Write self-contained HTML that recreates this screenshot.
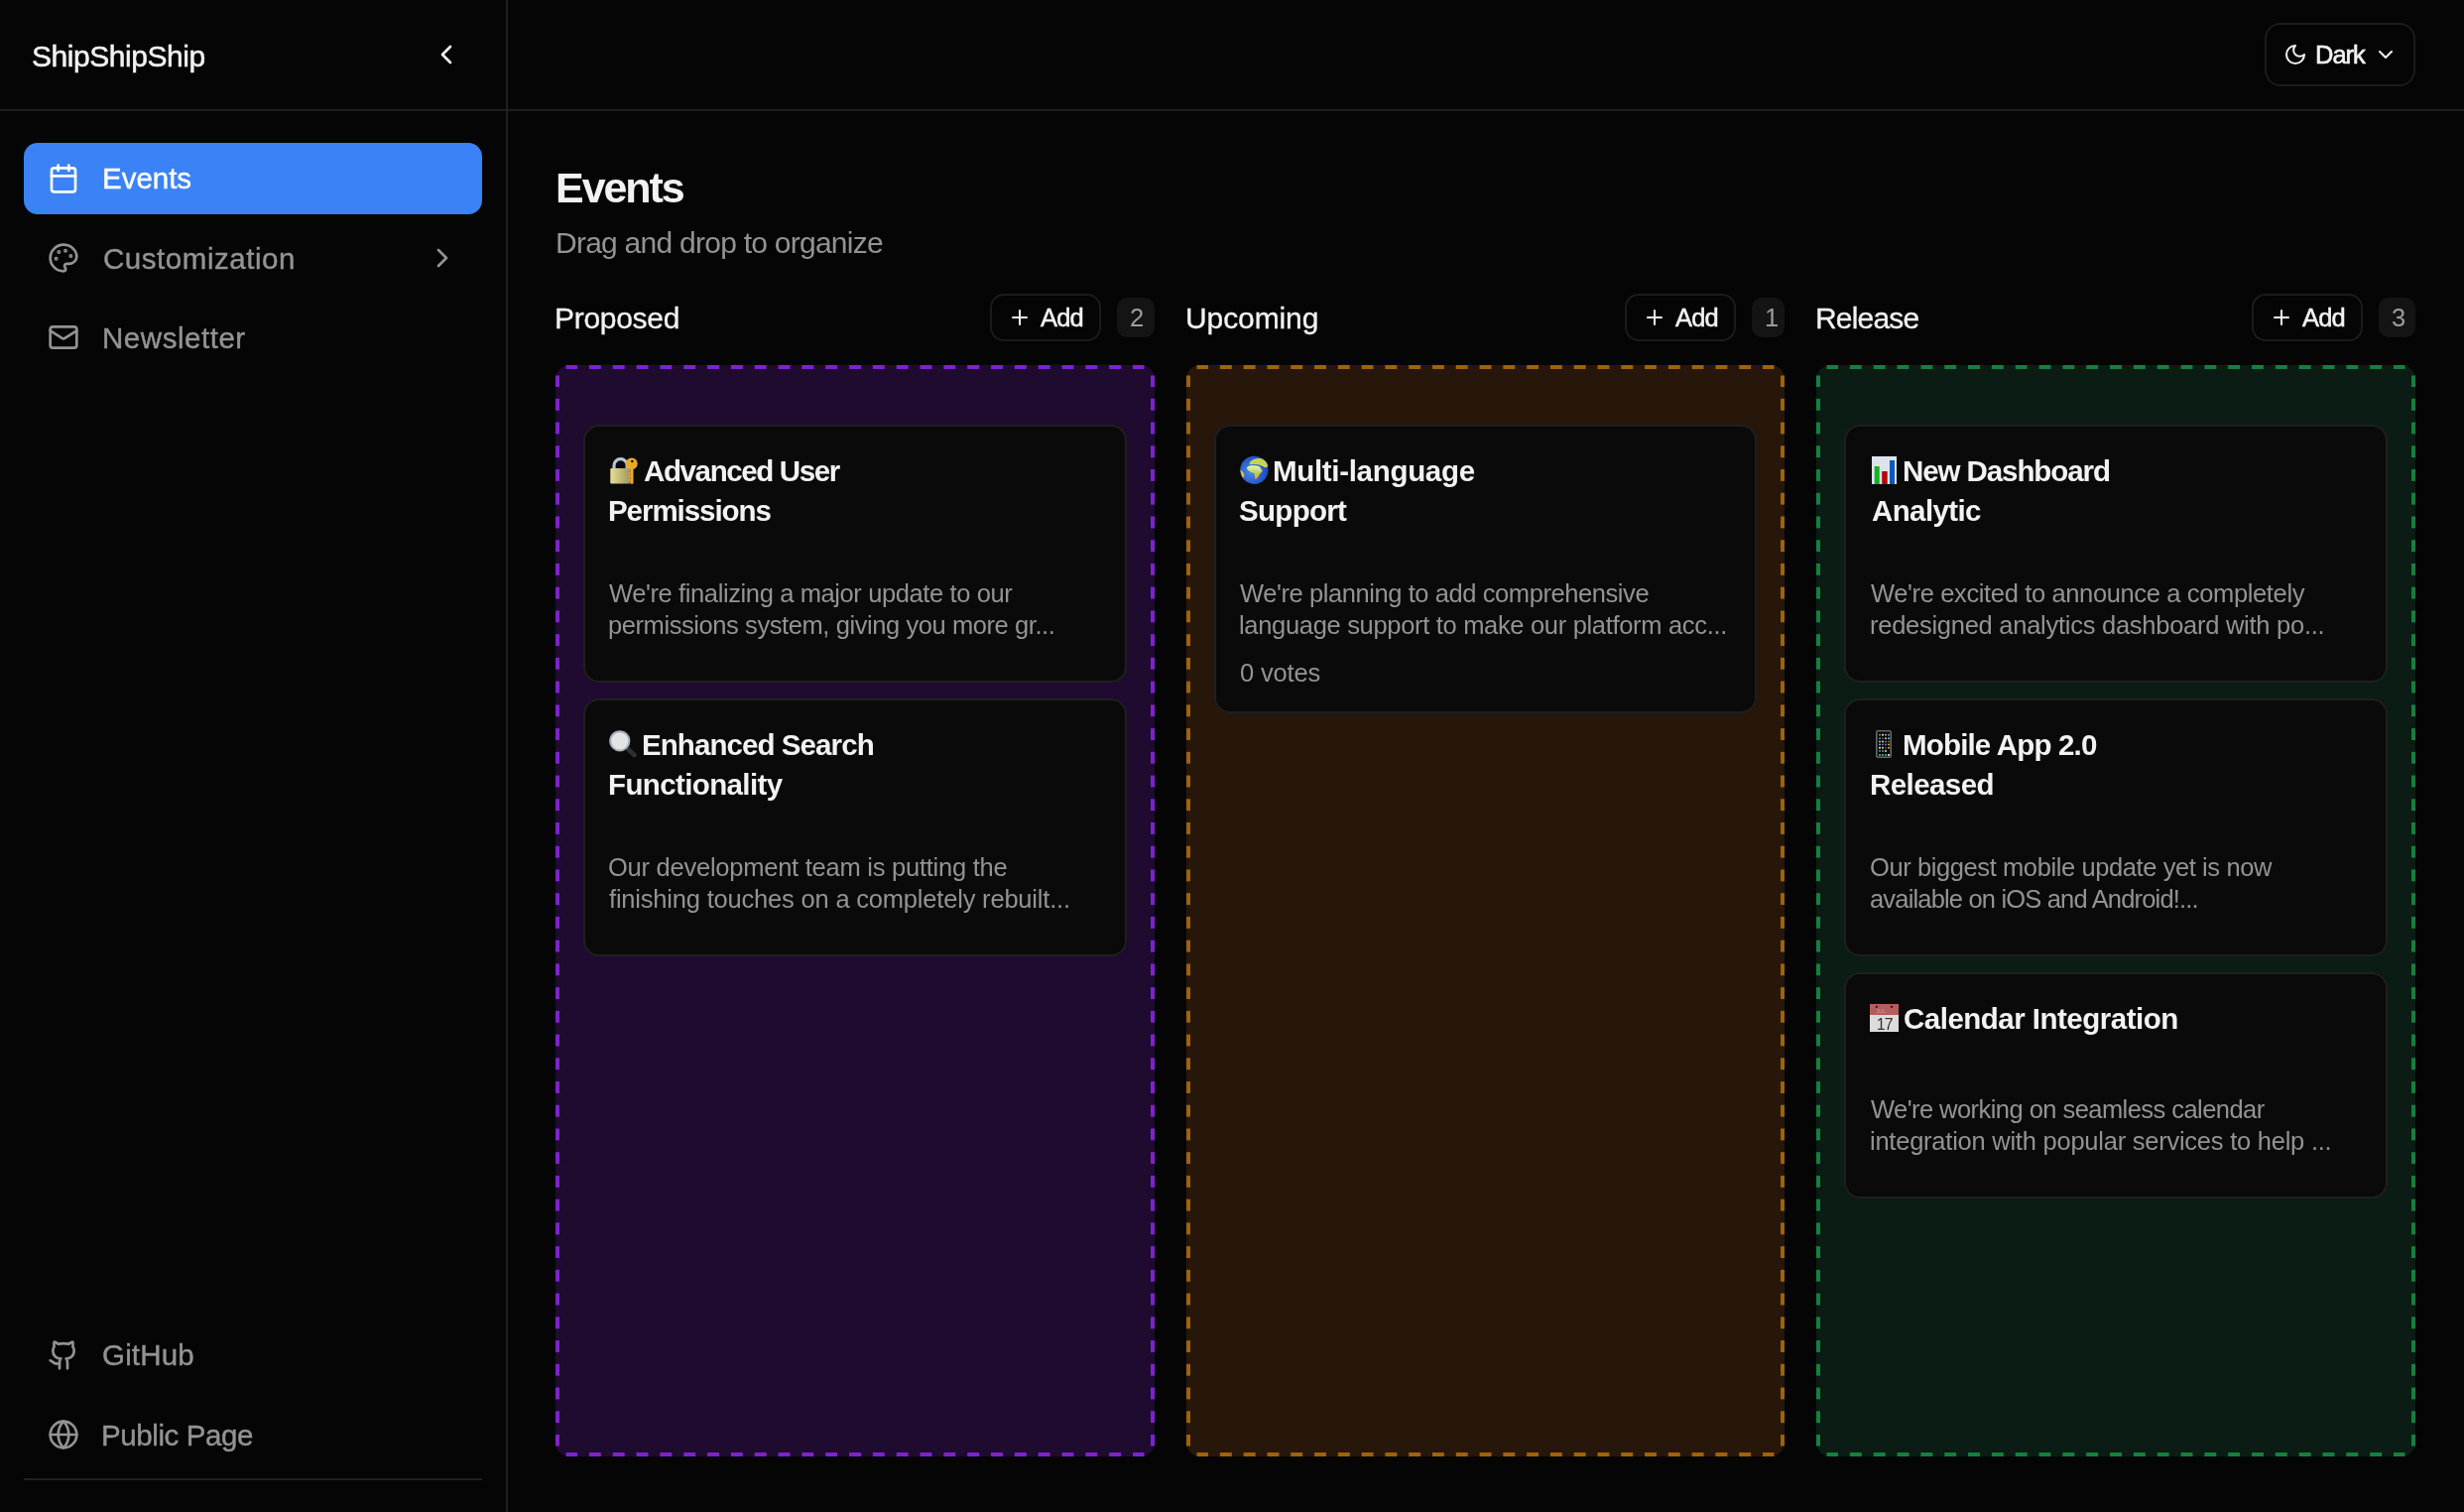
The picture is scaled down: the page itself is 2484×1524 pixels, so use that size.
<!DOCTYPE html>
<html><head><meta charset="utf-8"><title>Events</title>
<style>
html,body{margin:0;padding:0;}
body{width:2484px;height:1524px;overflow:hidden;background:#050505;position:relative;font-family:"Liberation Sans",sans-serif;}
.t{position:absolute;white-space:nowrap;will-change:transform;}
.b{position:absolute;}
.i{position:absolute;display:block;overflow:visible;}
</style></head><body>
<div class="b" style="left:510px;top:0px;width:2px;height:1524px;background:#1f1f1f"></div>
<div class="b" style="left:0px;top:110px;width:2484px;height:2px;background:#1f1f1f"></div>
<div class="t" style="left:31.87px;top:33.50px;font-size:30px;line-height:45px;color:#f2f2f2;letter-spacing:-0.456px;-webkit-text-stroke:0.5px #f2f2f2;">ShipShipShip</div>
<svg class="i" style="left:434px;top:39px;color:#f2f2f2" width="32" height="32" viewBox="0 0 24 24" fill="none" stroke="currentColor" stroke-width="2" stroke-linecap="round" stroke-linejoin="round"><path d="m15 18-6-6 6-6"/></svg>
<div class="b" style="left:24px;top:144px;width:462px;height:72px;background:#3b82f6;border-radius:14px"></div>
<svg class="i" style="left:48px;top:164px;color:#ffffff" width="32" height="32" viewBox="0 0 24 24" fill="none" stroke="currentColor" stroke-width="2" stroke-linecap="round" stroke-linejoin="round"><rect x="3" y="4" width="18" height="18" rx="2"/><path d="M16 2v4"/><path d="M8 2v4"/><path d="M3 10h18"/></svg>
<div class="t" style="left:103.28px;top:158.40px;font-size:29.5px;line-height:44px;color:#ffffff;letter-spacing:-0.016px;-webkit-text-stroke:0.4px #ffffff;">Events</div>
<svg class="i" style="left:48px;top:244px;color:#939393" width="32" height="32" viewBox="0 0 24 24" fill="none" stroke="currentColor" stroke-width="2" stroke-linecap="round" stroke-linejoin="round"><circle cx="13.5" cy="6.5" r=".5" fill="currentColor"/><circle cx="17.5" cy="10.5" r=".5" fill="currentColor"/><circle cx="8.5" cy="7.5" r=".5" fill="currentColor"/><circle cx="6.5" cy="12.5" r=".5" fill="currentColor"/><path d="M12 2C6.5 2 2 6.5 2 12s4.5 10 10 10c.926 0 1.648-.746 1.648-1.688 0-.437-.18-.835-.437-1.125-.29-.289-.438-.652-.438-1.125a1.640 1.640 0 0 1 1.668-1.668h1.996c3.051 0 5.555-2.503 5.555-5.554C21.965 6.012 17.461 2 12 2z"/></svg>
<div class="t" style="left:103.50px;top:238.90px;font-size:29.5px;line-height:44px;color:#939393;letter-spacing:0.542px;-webkit-text-stroke:0.4px #939393;">Customization</div>
<svg class="i" style="left:430px;top:244px;color:#939393" width="32" height="32" viewBox="0 0 24 24" fill="none" stroke="currentColor" stroke-width="2" stroke-linecap="round" stroke-linejoin="round"><path d="m9 18 6-6-6-6"/></svg>
<svg class="i" style="left:48px;top:324px;color:#939393" width="32" height="32" viewBox="0 0 24 24" fill="none" stroke="currentColor" stroke-width="2" stroke-linecap="round" stroke-linejoin="round"><rect x="2" y="4" width="20" height="16" rx="2"/><path d="m22 7-8.97 5.7a1.94 1.94 0 0 1-2.06 0L2 7"/></svg>
<div class="t" style="left:102.70px;top:318.70px;font-size:29.5px;line-height:44px;color:#939393;letter-spacing:0.538px;-webkit-text-stroke:0.4px #939393;">Newsletter</div>
<svg class="i" style="left:48px;top:1350px;color:#939393" width="32" height="32" viewBox="0 0 24 24" fill="none" stroke="currentColor" stroke-width="2" stroke-linecap="round" stroke-linejoin="round"><path d="M15 22v-4a4.8 4.8 0 0 0-1-3.5c3 0 6-2 6-5.5.08-1.25-.27-2.48-1-3.5.28-1.15.28-2.35 0-3.5 0 0-1 0-3 1.5-2.64-.5-5.36-.5-8 0C6 2 5 2 5 2c-.3 1.15-.3 2.35 0 3.5A5.403 5.403 0 0 0 4 9c0 3.5 3 5.5 6 5.5-.39.49-.68 1.05-.85 1.65-.17.6-.22 1.23-.15 1.85v4"/><path d="M9 18c-4.51 2-5-2-7-2"/></svg>
<div class="t" style="left:103.08px;top:1344.20px;font-size:29.5px;line-height:44px;color:#939393;letter-spacing:0.184px;-webkit-text-stroke:0.4px #939393;">GitHub</div>
<svg class="i" style="left:48px;top:1430px;color:#939393" width="32" height="32" viewBox="0 0 24 24" fill="none" stroke="currentColor" stroke-width="2" stroke-linecap="round" stroke-linejoin="round"><circle cx="12" cy="12" r="10"/><path d="M12 2a14.5 14.5 0 0 0 0 20 14.5 14.5 0 0 0 0-20"/><path d="M2 12h20"/></svg>
<div class="t" style="left:102.28px;top:1424.80px;font-size:29.5px;line-height:44px;color:#939393;letter-spacing:-0.400px;-webkit-text-stroke:0.4px #939393;">Public Page</div>
<div class="b" style="left:24px;top:1490px;width:462px;height:2px;background:#1f1f1f"></div>
<div class="b" style="left:2283px;top:23px;width:152px;height:64px;border:2px solid #1b1b1b;border-radius:16px;box-sizing:border-box"></div>
<svg class="i" style="left:2302px;top:43px;color:#f2f2f2" width="24" height="24" viewBox="0 0 24 24" fill="none" stroke="currentColor" stroke-width="2" stroke-linecap="round" stroke-linejoin="round"><path d="M12 3a6 6 0 0 0 9 9 9 9 0 1 1-9-9Z"/></svg>
<div class="t" style="left:2333.90px;top:36.00px;font-size:25.5px;line-height:38px;color:#f2f2f2;letter-spacing:-1.013px;-webkit-text-stroke:0.6px #f2f2f2;">Dark</div>
<svg class="i" style="left:2393px;top:43px;color:#f2f2f2" width="24" height="24" viewBox="0 0 24 24" fill="none" stroke="currentColor" stroke-width="2" stroke-linecap="round" stroke-linejoin="round"><path d="m6 9 6 6 6-6"/></svg>
<div class="t" style="left:559.52px;top:156.80px;font-size:43px;line-height:64px;color:#f2f2f2;font-weight:700;letter-spacing:-2.052px;">Events</div>
<div class="t" style="left:559.52px;top:222.00px;font-size:30px;line-height:45px;color:#939393;letter-spacing:-0.747px;">Drag and drop to organize</div>
<div class="t" style="left:558.83px;top:298.00px;font-size:30px;line-height:45px;color:#f2f2f2;letter-spacing:-0.289px;-webkit-text-stroke:0.3px #f2f2f2;">Proposed</div>
<div class="b" style="left:998px;top:296px;width:112px;height:48px;border:2px solid #1b1b1b;border-radius:14px;box-sizing:border-box"></div>
<svg class="i" style="left:1016px;top:308px;color:#f2f2f2" width="24" height="24" viewBox="0 0 24 24" fill="none" stroke="currentColor" stroke-width="2" stroke-linecap="round" stroke-linejoin="round"><path d="M5 12h14"/><path d="M12 5v14"/></svg>
<div class="t" style="left:1048.55px;top:301.00px;font-size:25.5px;line-height:38px;color:#f2f2f2;letter-spacing:-0.830px;-webkit-text-stroke:0.5px #f2f2f2;">Add</div>
<div class="b" style="left:1126px;top:300px;width:38px;height:40px;background:#141414;border-radius:10px"></div>
<div class="t" style="left:1138.80px;top:301.00px;font-size:25.5px;line-height:38px;color:#9c9c9c;">2</div>
<svg class="i" style="left:560px;top:368px" width="604" height="1100" viewBox="0 0 604 1100"><g fill="#7e22ce"><rect x="0" y="0" width="604" height="1100" rx="14" fill="#1e0b2f"/><rect x="33.915" y="0" width="11.915" height="4"/><rect x="33.915" y="1096" width="11.915" height="4"/><rect x="57.745" y="0" width="11.915" height="4"/><rect x="57.745" y="1096" width="11.915" height="4"/><rect x="81.574" y="0" width="11.915" height="4"/><rect x="81.574" y="1096" width="11.915" height="4"/><rect x="105.404" y="0" width="11.915" height="4"/><rect x="105.404" y="1096" width="11.915" height="4"/><rect x="129.234" y="0" width="11.915" height="4"/><rect x="129.234" y="1096" width="11.915" height="4"/><rect x="153.064" y="0" width="11.915" height="4"/><rect x="153.064" y="1096" width="11.915" height="4"/><rect x="176.894" y="0" width="11.915" height="4"/><rect x="176.894" y="1096" width="11.915" height="4"/><rect x="200.723" y="0" width="11.915" height="4"/><rect x="200.723" y="1096" width="11.915" height="4"/><rect x="224.553" y="0" width="11.915" height="4"/><rect x="224.553" y="1096" width="11.915" height="4"/><rect x="248.383" y="0" width="11.915" height="4"/><rect x="248.383" y="1096" width="11.915" height="4"/><rect x="272.213" y="0" width="11.915" height="4"/><rect x="272.213" y="1096" width="11.915" height="4"/><rect x="296.043" y="0" width="11.915" height="4"/><rect x="296.043" y="1096" width="11.915" height="4"/><rect x="319.872" y="0" width="11.915" height="4"/><rect x="319.872" y="1096" width="11.915" height="4"/><rect x="343.702" y="0" width="11.915" height="4"/><rect x="343.702" y="1096" width="11.915" height="4"/><rect x="367.532" y="0" width="11.915" height="4"/><rect x="367.532" y="1096" width="11.915" height="4"/><rect x="391.362" y="0" width="11.915" height="4"/><rect x="391.362" y="1096" width="11.915" height="4"/><rect x="415.191" y="0" width="11.915" height="4"/><rect x="415.191" y="1096" width="11.915" height="4"/><rect x="439.021" y="0" width="11.915" height="4"/><rect x="439.021" y="1096" width="11.915" height="4"/><rect x="462.851" y="0" width="11.915" height="4"/><rect x="462.851" y="1096" width="11.915" height="4"/><rect x="486.681" y="0" width="11.915" height="4"/><rect x="486.681" y="1096" width="11.915" height="4"/><rect x="510.511" y="0" width="11.915" height="4"/><rect x="510.511" y="1096" width="11.915" height="4"/><rect x="534.340" y="0" width="11.915" height="4"/><rect x="534.340" y="1096" width="11.915" height="4"/><rect x="558.170" y="0" width="11.915" height="4"/><rect x="558.170" y="1096" width="11.915" height="4"/><rect x="0" y="33.865" width="4" height="11.865"/><rect x="600" y="33.865" width="4" height="11.865"/><rect x="0" y="57.596" width="4" height="11.865"/><rect x="600" y="57.596" width="4" height="11.865"/><rect x="0" y="81.326" width="4" height="11.865"/><rect x="600" y="81.326" width="4" height="11.865"/><rect x="0" y="105.056" width="4" height="11.865"/><rect x="600" y="105.056" width="4" height="11.865"/><rect x="0" y="128.787" width="4" height="11.865"/><rect x="600" y="128.787" width="4" height="11.865"/><rect x="0" y="152.517" width="4" height="11.865"/><rect x="600" y="152.517" width="4" height="11.865"/><rect x="0" y="176.247" width="4" height="11.865"/><rect x="600" y="176.247" width="4" height="11.865"/><rect x="0" y="199.978" width="4" height="11.865"/><rect x="600" y="199.978" width="4" height="11.865"/><rect x="0" y="223.708" width="4" height="11.865"/><rect x="600" y="223.708" width="4" height="11.865"/><rect x="0" y="247.438" width="4" height="11.865"/><rect x="600" y="247.438" width="4" height="11.865"/><rect x="0" y="271.169" width="4" height="11.865"/><rect x="600" y="271.169" width="4" height="11.865"/><rect x="0" y="294.899" width="4" height="11.865"/><rect x="600" y="294.899" width="4" height="11.865"/><rect x="0" y="318.629" width="4" height="11.865"/><rect x="600" y="318.629" width="4" height="11.865"/><rect x="0" y="342.360" width="4" height="11.865"/><rect x="600" y="342.360" width="4" height="11.865"/><rect x="0" y="366.090" width="4" height="11.865"/><rect x="600" y="366.090" width="4" height="11.865"/><rect x="0" y="389.820" width="4" height="11.865"/><rect x="600" y="389.820" width="4" height="11.865"/><rect x="0" y="413.551" width="4" height="11.865"/><rect x="600" y="413.551" width="4" height="11.865"/><rect x="0" y="437.281" width="4" height="11.865"/><rect x="600" y="437.281" width="4" height="11.865"/><rect x="0" y="461.011" width="4" height="11.865"/><rect x="600" y="461.011" width="4" height="11.865"/><rect x="0" y="484.742" width="4" height="11.865"/><rect x="600" y="484.742" width="4" height="11.865"/><rect x="0" y="508.472" width="4" height="11.865"/><rect x="600" y="508.472" width="4" height="11.865"/><rect x="0" y="532.202" width="4" height="11.865"/><rect x="600" y="532.202" width="4" height="11.865"/><rect x="0" y="555.933" width="4" height="11.865"/><rect x="600" y="555.933" width="4" height="11.865"/><rect x="0" y="579.663" width="4" height="11.865"/><rect x="600" y="579.663" width="4" height="11.865"/><rect x="0" y="603.393" width="4" height="11.865"/><rect x="600" y="603.393" width="4" height="11.865"/><rect x="0" y="627.124" width="4" height="11.865"/><rect x="600" y="627.124" width="4" height="11.865"/><rect x="0" y="650.854" width="4" height="11.865"/><rect x="600" y="650.854" width="4" height="11.865"/><rect x="0" y="674.584" width="4" height="11.865"/><rect x="600" y="674.584" width="4" height="11.865"/><rect x="0" y="698.315" width="4" height="11.865"/><rect x="600" y="698.315" width="4" height="11.865"/><rect x="0" y="722.045" width="4" height="11.865"/><rect x="600" y="722.045" width="4" height="11.865"/><rect x="0" y="745.775" width="4" height="11.865"/><rect x="600" y="745.775" width="4" height="11.865"/><rect x="0" y="769.506" width="4" height="11.865"/><rect x="600" y="769.506" width="4" height="11.865"/><rect x="0" y="793.236" width="4" height="11.865"/><rect x="600" y="793.236" width="4" height="11.865"/><rect x="0" y="816.966" width="4" height="11.865"/><rect x="600" y="816.966" width="4" height="11.865"/><rect x="0" y="840.697" width="4" height="11.865"/><rect x="600" y="840.697" width="4" height="11.865"/><rect x="0" y="864.427" width="4" height="11.865"/><rect x="600" y="864.427" width="4" height="11.865"/><rect x="0" y="888.157" width="4" height="11.865"/><rect x="600" y="888.157" width="4" height="11.865"/><rect x="0" y="911.888" width="4" height="11.865"/><rect x="600" y="911.888" width="4" height="11.865"/><rect x="0" y="935.618" width="4" height="11.865"/><rect x="600" y="935.618" width="4" height="11.865"/><rect x="0" y="959.348" width="4" height="11.865"/><rect x="600" y="959.348" width="4" height="11.865"/><rect x="0" y="983.079" width="4" height="11.865"/><rect x="600" y="983.079" width="4" height="11.865"/><rect x="0" y="1006.809" width="4" height="11.865"/><rect x="600" y="1006.809" width="4" height="11.865"/><rect x="0" y="1030.539" width="4" height="11.865"/><rect x="600" y="1030.539" width="4" height="11.865"/><rect x="0" y="1054.270" width="4" height="11.865"/><rect x="600" y="1054.270" width="4" height="11.865"/><rect x="10.5" y="0" width="11.5" height="4"/><rect x="582" y="0" width="11.5" height="4"/><rect x="10.5" y="1096" width="11.5" height="4"/><rect x="582" y="1096" width="11.5" height="4"/><rect x="0" y="10.5" width="4" height="11.5"/><rect x="600" y="10.5" width="4" height="11.5"/><rect x="0" y="1078" width="4" height="11.5"/><rect x="600" y="1078" width="4" height="11.5"/></g></svg>
<div class="t" style="left:1194.83px;top:298.00px;font-size:30px;line-height:45px;color:#f2f2f2;letter-spacing:-0.097px;-webkit-text-stroke:0.3px #f2f2f2;">Upcoming</div>
<div class="b" style="left:1638px;top:296px;width:112px;height:48px;border:2px solid #1b1b1b;border-radius:14px;box-sizing:border-box"></div>
<svg class="i" style="left:1656px;top:308px;color:#f2f2f2" width="24" height="24" viewBox="0 0 24 24" fill="none" stroke="currentColor" stroke-width="2" stroke-linecap="round" stroke-linejoin="round"><path d="M5 12h14"/><path d="M12 5v14"/></svg>
<div class="t" style="left:1688.55px;top:301.00px;font-size:25.5px;line-height:38px;color:#f2f2f2;letter-spacing:-0.830px;-webkit-text-stroke:0.5px #f2f2f2;">Add</div>
<div class="b" style="left:1766px;top:300px;width:33px;height:40px;background:#141414;border-radius:10px"></div>
<div class="t" style="left:1779.20px;top:301.00px;font-size:25.5px;line-height:38px;color:#9c9c9c;">1</div>
<svg class="i" style="left:1196px;top:368px" width="603" height="1100" viewBox="0 0 603 1100"><g fill="#a16207"><rect x="0" y="0" width="603" height="1100" rx="14" fill="#26170a"/><rect x="33.894" y="0" width="11.894" height="4"/><rect x="33.894" y="1096" width="11.894" height="4"/><rect x="57.681" y="0" width="11.894" height="4"/><rect x="57.681" y="1096" width="11.894" height="4"/><rect x="81.468" y="0" width="11.894" height="4"/><rect x="81.468" y="1096" width="11.894" height="4"/><rect x="105.255" y="0" width="11.894" height="4"/><rect x="105.255" y="1096" width="11.894" height="4"/><rect x="129.043" y="0" width="11.894" height="4"/><rect x="129.043" y="1096" width="11.894" height="4"/><rect x="152.830" y="0" width="11.894" height="4"/><rect x="152.830" y="1096" width="11.894" height="4"/><rect x="176.617" y="0" width="11.894" height="4"/><rect x="176.617" y="1096" width="11.894" height="4"/><rect x="200.404" y="0" width="11.894" height="4"/><rect x="200.404" y="1096" width="11.894" height="4"/><rect x="224.191" y="0" width="11.894" height="4"/><rect x="224.191" y="1096" width="11.894" height="4"/><rect x="247.979" y="0" width="11.894" height="4"/><rect x="247.979" y="1096" width="11.894" height="4"/><rect x="271.766" y="0" width="11.894" height="4"/><rect x="271.766" y="1096" width="11.894" height="4"/><rect x="295.553" y="0" width="11.894" height="4"/><rect x="295.553" y="1096" width="11.894" height="4"/><rect x="319.340" y="0" width="11.894" height="4"/><rect x="319.340" y="1096" width="11.894" height="4"/><rect x="343.128" y="0" width="11.894" height="4"/><rect x="343.128" y="1096" width="11.894" height="4"/><rect x="366.915" y="0" width="11.894" height="4"/><rect x="366.915" y="1096" width="11.894" height="4"/><rect x="390.702" y="0" width="11.894" height="4"/><rect x="390.702" y="1096" width="11.894" height="4"/><rect x="414.489" y="0" width="11.894" height="4"/><rect x="414.489" y="1096" width="11.894" height="4"/><rect x="438.277" y="0" width="11.894" height="4"/><rect x="438.277" y="1096" width="11.894" height="4"/><rect x="462.064" y="0" width="11.894" height="4"/><rect x="462.064" y="1096" width="11.894" height="4"/><rect x="485.851" y="0" width="11.894" height="4"/><rect x="485.851" y="1096" width="11.894" height="4"/><rect x="509.638" y="0" width="11.894" height="4"/><rect x="509.638" y="1096" width="11.894" height="4"/><rect x="533.426" y="0" width="11.894" height="4"/><rect x="533.426" y="1096" width="11.894" height="4"/><rect x="557.213" y="0" width="11.894" height="4"/><rect x="557.213" y="1096" width="11.894" height="4"/><rect x="0" y="33.865" width="4" height="11.865"/><rect x="599" y="33.865" width="4" height="11.865"/><rect x="0" y="57.596" width="4" height="11.865"/><rect x="599" y="57.596" width="4" height="11.865"/><rect x="0" y="81.326" width="4" height="11.865"/><rect x="599" y="81.326" width="4" height="11.865"/><rect x="0" y="105.056" width="4" height="11.865"/><rect x="599" y="105.056" width="4" height="11.865"/><rect x="0" y="128.787" width="4" height="11.865"/><rect x="599" y="128.787" width="4" height="11.865"/><rect x="0" y="152.517" width="4" height="11.865"/><rect x="599" y="152.517" width="4" height="11.865"/><rect x="0" y="176.247" width="4" height="11.865"/><rect x="599" y="176.247" width="4" height="11.865"/><rect x="0" y="199.978" width="4" height="11.865"/><rect x="599" y="199.978" width="4" height="11.865"/><rect x="0" y="223.708" width="4" height="11.865"/><rect x="599" y="223.708" width="4" height="11.865"/><rect x="0" y="247.438" width="4" height="11.865"/><rect x="599" y="247.438" width="4" height="11.865"/><rect x="0" y="271.169" width="4" height="11.865"/><rect x="599" y="271.169" width="4" height="11.865"/><rect x="0" y="294.899" width="4" height="11.865"/><rect x="599" y="294.899" width="4" height="11.865"/><rect x="0" y="318.629" width="4" height="11.865"/><rect x="599" y="318.629" width="4" height="11.865"/><rect x="0" y="342.360" width="4" height="11.865"/><rect x="599" y="342.360" width="4" height="11.865"/><rect x="0" y="366.090" width="4" height="11.865"/><rect x="599" y="366.090" width="4" height="11.865"/><rect x="0" y="389.820" width="4" height="11.865"/><rect x="599" y="389.820" width="4" height="11.865"/><rect x="0" y="413.551" width="4" height="11.865"/><rect x="599" y="413.551" width="4" height="11.865"/><rect x="0" y="437.281" width="4" height="11.865"/><rect x="599" y="437.281" width="4" height="11.865"/><rect x="0" y="461.011" width="4" height="11.865"/><rect x="599" y="461.011" width="4" height="11.865"/><rect x="0" y="484.742" width="4" height="11.865"/><rect x="599" y="484.742" width="4" height="11.865"/><rect x="0" y="508.472" width="4" height="11.865"/><rect x="599" y="508.472" width="4" height="11.865"/><rect x="0" y="532.202" width="4" height="11.865"/><rect x="599" y="532.202" width="4" height="11.865"/><rect x="0" y="555.933" width="4" height="11.865"/><rect x="599" y="555.933" width="4" height="11.865"/><rect x="0" y="579.663" width="4" height="11.865"/><rect x="599" y="579.663" width="4" height="11.865"/><rect x="0" y="603.393" width="4" height="11.865"/><rect x="599" y="603.393" width="4" height="11.865"/><rect x="0" y="627.124" width="4" height="11.865"/><rect x="599" y="627.124" width="4" height="11.865"/><rect x="0" y="650.854" width="4" height="11.865"/><rect x="599" y="650.854" width="4" height="11.865"/><rect x="0" y="674.584" width="4" height="11.865"/><rect x="599" y="674.584" width="4" height="11.865"/><rect x="0" y="698.315" width="4" height="11.865"/><rect x="599" y="698.315" width="4" height="11.865"/><rect x="0" y="722.045" width="4" height="11.865"/><rect x="599" y="722.045" width="4" height="11.865"/><rect x="0" y="745.775" width="4" height="11.865"/><rect x="599" y="745.775" width="4" height="11.865"/><rect x="0" y="769.506" width="4" height="11.865"/><rect x="599" y="769.506" width="4" height="11.865"/><rect x="0" y="793.236" width="4" height="11.865"/><rect x="599" y="793.236" width="4" height="11.865"/><rect x="0" y="816.966" width="4" height="11.865"/><rect x="599" y="816.966" width="4" height="11.865"/><rect x="0" y="840.697" width="4" height="11.865"/><rect x="599" y="840.697" width="4" height="11.865"/><rect x="0" y="864.427" width="4" height="11.865"/><rect x="599" y="864.427" width="4" height="11.865"/><rect x="0" y="888.157" width="4" height="11.865"/><rect x="599" y="888.157" width="4" height="11.865"/><rect x="0" y="911.888" width="4" height="11.865"/><rect x="599" y="911.888" width="4" height="11.865"/><rect x="0" y="935.618" width="4" height="11.865"/><rect x="599" y="935.618" width="4" height="11.865"/><rect x="0" y="959.348" width="4" height="11.865"/><rect x="599" y="959.348" width="4" height="11.865"/><rect x="0" y="983.079" width="4" height="11.865"/><rect x="599" y="983.079" width="4" height="11.865"/><rect x="0" y="1006.809" width="4" height="11.865"/><rect x="599" y="1006.809" width="4" height="11.865"/><rect x="0" y="1030.539" width="4" height="11.865"/><rect x="599" y="1030.539" width="4" height="11.865"/><rect x="0" y="1054.270" width="4" height="11.865"/><rect x="599" y="1054.270" width="4" height="11.865"/><rect x="10.5" y="0" width="11.5" height="4"/><rect x="581" y="0" width="11.5" height="4"/><rect x="10.5" y="1096" width="11.5" height="4"/><rect x="581" y="1096" width="11.5" height="4"/><rect x="0" y="10.5" width="4" height="11.5"/><rect x="599" y="10.5" width="4" height="11.5"/><rect x="0" y="1078" width="4" height="11.5"/><rect x="599" y="1078" width="4" height="11.5"/></g></svg>
<div class="t" style="left:1830.41px;top:298.00px;font-size:30px;line-height:45px;color:#f2f2f2;letter-spacing:-0.830px;-webkit-text-stroke:0.3px #f2f2f2;">Release</div>
<div class="b" style="left:2270px;top:296px;width:112px;height:48px;border:2px solid #1b1b1b;border-radius:14px;box-sizing:border-box"></div>
<svg class="i" style="left:2288px;top:308px;color:#f2f2f2" width="24" height="24" viewBox="0 0 24 24" fill="none" stroke="currentColor" stroke-width="2" stroke-linecap="round" stroke-linejoin="round"><path d="M5 12h14"/><path d="M12 5v14"/></svg>
<div class="t" style="left:2320.55px;top:301.00px;font-size:25.5px;line-height:38px;color:#f2f2f2;letter-spacing:-0.830px;-webkit-text-stroke:0.5px #f2f2f2;">Add</div>
<div class="b" style="left:2398px;top:300px;width:37px;height:40px;background:#141414;border-radius:10px"></div>
<div class="t" style="left:2410.70px;top:301.00px;font-size:25.5px;line-height:38px;color:#9c9c9c;">3</div>
<svg class="i" style="left:1831px;top:368px" width="604" height="1100" viewBox="0 0 604 1100"><g fill="#15803d"><rect x="0" y="0" width="604" height="1100" rx="14" fill="#0a1c13"/><rect x="33.915" y="0" width="11.915" height="4"/><rect x="33.915" y="1096" width="11.915" height="4"/><rect x="57.745" y="0" width="11.915" height="4"/><rect x="57.745" y="1096" width="11.915" height="4"/><rect x="81.574" y="0" width="11.915" height="4"/><rect x="81.574" y="1096" width="11.915" height="4"/><rect x="105.404" y="0" width="11.915" height="4"/><rect x="105.404" y="1096" width="11.915" height="4"/><rect x="129.234" y="0" width="11.915" height="4"/><rect x="129.234" y="1096" width="11.915" height="4"/><rect x="153.064" y="0" width="11.915" height="4"/><rect x="153.064" y="1096" width="11.915" height="4"/><rect x="176.894" y="0" width="11.915" height="4"/><rect x="176.894" y="1096" width="11.915" height="4"/><rect x="200.723" y="0" width="11.915" height="4"/><rect x="200.723" y="1096" width="11.915" height="4"/><rect x="224.553" y="0" width="11.915" height="4"/><rect x="224.553" y="1096" width="11.915" height="4"/><rect x="248.383" y="0" width="11.915" height="4"/><rect x="248.383" y="1096" width="11.915" height="4"/><rect x="272.213" y="0" width="11.915" height="4"/><rect x="272.213" y="1096" width="11.915" height="4"/><rect x="296.043" y="0" width="11.915" height="4"/><rect x="296.043" y="1096" width="11.915" height="4"/><rect x="319.872" y="0" width="11.915" height="4"/><rect x="319.872" y="1096" width="11.915" height="4"/><rect x="343.702" y="0" width="11.915" height="4"/><rect x="343.702" y="1096" width="11.915" height="4"/><rect x="367.532" y="0" width="11.915" height="4"/><rect x="367.532" y="1096" width="11.915" height="4"/><rect x="391.362" y="0" width="11.915" height="4"/><rect x="391.362" y="1096" width="11.915" height="4"/><rect x="415.191" y="0" width="11.915" height="4"/><rect x="415.191" y="1096" width="11.915" height="4"/><rect x="439.021" y="0" width="11.915" height="4"/><rect x="439.021" y="1096" width="11.915" height="4"/><rect x="462.851" y="0" width="11.915" height="4"/><rect x="462.851" y="1096" width="11.915" height="4"/><rect x="486.681" y="0" width="11.915" height="4"/><rect x="486.681" y="1096" width="11.915" height="4"/><rect x="510.511" y="0" width="11.915" height="4"/><rect x="510.511" y="1096" width="11.915" height="4"/><rect x="534.340" y="0" width="11.915" height="4"/><rect x="534.340" y="1096" width="11.915" height="4"/><rect x="558.170" y="0" width="11.915" height="4"/><rect x="558.170" y="1096" width="11.915" height="4"/><rect x="0" y="33.865" width="4" height="11.865"/><rect x="600" y="33.865" width="4" height="11.865"/><rect x="0" y="57.596" width="4" height="11.865"/><rect x="600" y="57.596" width="4" height="11.865"/><rect x="0" y="81.326" width="4" height="11.865"/><rect x="600" y="81.326" width="4" height="11.865"/><rect x="0" y="105.056" width="4" height="11.865"/><rect x="600" y="105.056" width="4" height="11.865"/><rect x="0" y="128.787" width="4" height="11.865"/><rect x="600" y="128.787" width="4" height="11.865"/><rect x="0" y="152.517" width="4" height="11.865"/><rect x="600" y="152.517" width="4" height="11.865"/><rect x="0" y="176.247" width="4" height="11.865"/><rect x="600" y="176.247" width="4" height="11.865"/><rect x="0" y="199.978" width="4" height="11.865"/><rect x="600" y="199.978" width="4" height="11.865"/><rect x="0" y="223.708" width="4" height="11.865"/><rect x="600" y="223.708" width="4" height="11.865"/><rect x="0" y="247.438" width="4" height="11.865"/><rect x="600" y="247.438" width="4" height="11.865"/><rect x="0" y="271.169" width="4" height="11.865"/><rect x="600" y="271.169" width="4" height="11.865"/><rect x="0" y="294.899" width="4" height="11.865"/><rect x="600" y="294.899" width="4" height="11.865"/><rect x="0" y="318.629" width="4" height="11.865"/><rect x="600" y="318.629" width="4" height="11.865"/><rect x="0" y="342.360" width="4" height="11.865"/><rect x="600" y="342.360" width="4" height="11.865"/><rect x="0" y="366.090" width="4" height="11.865"/><rect x="600" y="366.090" width="4" height="11.865"/><rect x="0" y="389.820" width="4" height="11.865"/><rect x="600" y="389.820" width="4" height="11.865"/><rect x="0" y="413.551" width="4" height="11.865"/><rect x="600" y="413.551" width="4" height="11.865"/><rect x="0" y="437.281" width="4" height="11.865"/><rect x="600" y="437.281" width="4" height="11.865"/><rect x="0" y="461.011" width="4" height="11.865"/><rect x="600" y="461.011" width="4" height="11.865"/><rect x="0" y="484.742" width="4" height="11.865"/><rect x="600" y="484.742" width="4" height="11.865"/><rect x="0" y="508.472" width="4" height="11.865"/><rect x="600" y="508.472" width="4" height="11.865"/><rect x="0" y="532.202" width="4" height="11.865"/><rect x="600" y="532.202" width="4" height="11.865"/><rect x="0" y="555.933" width="4" height="11.865"/><rect x="600" y="555.933" width="4" height="11.865"/><rect x="0" y="579.663" width="4" height="11.865"/><rect x="600" y="579.663" width="4" height="11.865"/><rect x="0" y="603.393" width="4" height="11.865"/><rect x="600" y="603.393" width="4" height="11.865"/><rect x="0" y="627.124" width="4" height="11.865"/><rect x="600" y="627.124" width="4" height="11.865"/><rect x="0" y="650.854" width="4" height="11.865"/><rect x="600" y="650.854" width="4" height="11.865"/><rect x="0" y="674.584" width="4" height="11.865"/><rect x="600" y="674.584" width="4" height="11.865"/><rect x="0" y="698.315" width="4" height="11.865"/><rect x="600" y="698.315" width="4" height="11.865"/><rect x="0" y="722.045" width="4" height="11.865"/><rect x="600" y="722.045" width="4" height="11.865"/><rect x="0" y="745.775" width="4" height="11.865"/><rect x="600" y="745.775" width="4" height="11.865"/><rect x="0" y="769.506" width="4" height="11.865"/><rect x="600" y="769.506" width="4" height="11.865"/><rect x="0" y="793.236" width="4" height="11.865"/><rect x="600" y="793.236" width="4" height="11.865"/><rect x="0" y="816.966" width="4" height="11.865"/><rect x="600" y="816.966" width="4" height="11.865"/><rect x="0" y="840.697" width="4" height="11.865"/><rect x="600" y="840.697" width="4" height="11.865"/><rect x="0" y="864.427" width="4" height="11.865"/><rect x="600" y="864.427" width="4" height="11.865"/><rect x="0" y="888.157" width="4" height="11.865"/><rect x="600" y="888.157" width="4" height="11.865"/><rect x="0" y="911.888" width="4" height="11.865"/><rect x="600" y="911.888" width="4" height="11.865"/><rect x="0" y="935.618" width="4" height="11.865"/><rect x="600" y="935.618" width="4" height="11.865"/><rect x="0" y="959.348" width="4" height="11.865"/><rect x="600" y="959.348" width="4" height="11.865"/><rect x="0" y="983.079" width="4" height="11.865"/><rect x="600" y="983.079" width="4" height="11.865"/><rect x="0" y="1006.809" width="4" height="11.865"/><rect x="600" y="1006.809" width="4" height="11.865"/><rect x="0" y="1030.539" width="4" height="11.865"/><rect x="600" y="1030.539" width="4" height="11.865"/><rect x="0" y="1054.270" width="4" height="11.865"/><rect x="600" y="1054.270" width="4" height="11.865"/><rect x="10.5" y="0" width="11.5" height="4"/><rect x="582" y="0" width="11.5" height="4"/><rect x="10.5" y="1096" width="11.5" height="4"/><rect x="582" y="1096" width="11.5" height="4"/><rect x="0" y="10.5" width="4" height="11.5"/><rect x="600" y="10.5" width="4" height="11.5"/><rect x="0" y="1078" width="4" height="11.5"/><rect x="600" y="1078" width="4" height="11.5"/></g></svg>
<div class="b" style="left:588px;top:428px;width:548px;height:260px;background:#0a0a0a;border:2px solid #1f1f1f;border-radius:16px;box-sizing:border-box"></div>
<svg class="i" style="left:614.6px;top:461px" width="28" height="27" viewBox="0 0 28 27">
<path d="M4 11.5 V8.2 a6.6 6.6 0 0 1 13.2 0 V11" fill="none" stroke="#b4c6dc" stroke-width="3.2"/>
<defs><linearGradient id="lb" x1="0" x2="1" y1="0" y2="0"><stop offset="0" stop-color="#e6df98"/><stop offset="0.45" stop-color="#c9c07a"/><stop offset="1" stop-color="#9c9460"/></linearGradient></defs>
<rect x="0.3" y="11" width="20" height="15.4" rx="1.2" fill="url(#lb)"/>
<circle cx="21.8" cy="6.3" r="5.9" fill="#eaa92a"/><circle cx="22.3" cy="4.1" r="1.25" fill="#111"/>
<rect x="20.3" y="10" width="3.2" height="16.8" rx="0.8" fill="#eaa92a"/>
<rect x="18.6" y="15" width="2" height="1.5" fill="#eaa92a"/><rect x="18.6" y="18.5" width="2" height="1.5" fill="#eaa92a"/><rect x="18.6" y="22" width="2" height="1.5" fill="#eaa92a"/>
</svg>
<div class="t" style="left:649.42px;top:452.80px;font-size:29.5px;line-height:44px;color:#f2f2f2;font-weight:700;letter-spacing:-1.375px;">Advanced User</div>
<div class="t" style="left:612.52px;top:492.80px;font-size:29.5px;line-height:44px;color:#f2f2f2;font-weight:700;letter-spacing:-1.052px;">Permissions</div>
<div class="t" style="left:614.00px;top:579.00px;font-size:25.5px;line-height:38px;color:#939393;letter-spacing:-0.387px;">We're finalizing a major update to our</div>
<div class="t" style="left:613.20px;top:611.00px;font-size:25.5px;line-height:38px;color:#939393;letter-spacing:-0.421px;">permissions system, giving you more gr...</div>
<div class="b" style="left:588px;top:704px;width:548px;height:260px;background:#0a0a0a;border:2px solid #1f1f1f;border-radius:16px;box-sizing:border-box"></div>
<svg class="i" style="left:614px;top:736px" width="29" height="28" viewBox="0 0 29 28">
<line x1="18.5" y1="18.5" x2="25.5" y2="25" stroke="#2a3038" stroke-width="4.6" stroke-linecap="round"/>
<circle cx="10.8" cy="10.8" r="9.6" fill="#e3e3e3" stroke="#a5b0bd" stroke-width="2"/>
</svg>
<div class="t" style="left:647.40px;top:728.80px;font-size:29.5px;line-height:44px;color:#f2f2f2;font-weight:700;letter-spacing:-0.923px;">Enhanced Search</div>
<div class="t" style="left:612.52px;top:768.80px;font-size:29.5px;line-height:44px;color:#f2f2f2;font-weight:700;letter-spacing:-0.623px;">Functionality</div>
<div class="t" style="left:613.20px;top:855.00px;font-size:25.5px;line-height:38px;color:#939393;letter-spacing:-0.247px;">Our development team is putting the</div>
<div class="t" style="left:614.00px;top:887.00px;font-size:25.5px;line-height:38px;color:#939393;letter-spacing:-0.195px;">finishing touches on a completely rebuilt...</div>
<div class="b" style="left:1224px;top:428px;width:547px;height:291px;background:#0a0a0a;border:2px solid #1f1f1f;border-radius:16px;box-sizing:border-box"></div>
<svg class="i" style="left:1250px;top:460px" width="29" height="28" viewBox="0 0 29 28">
<defs><radialGradient id="gg" cx="0.38" cy="0.55" r="0.75"><stop offset="0" stop-color="#4a8ee6"/><stop offset="0.7" stop-color="#2350c8"/><stop offset="1" stop-color="#1d3a9c"/></radialGradient>
<linearGradient id="ga" x1="0" x2="0" y1="0" y2="1"><stop offset="0" stop-color="#f7f4b4"/><stop offset="0.45" stop-color="#b8d86a"/><stop offset="0.75" stop-color="#d6b634"/><stop offset="1" stop-color="#e0a82a"/></linearGradient></defs>
<circle cx="14.4" cy="13.8" r="14.1" fill="url(#gg)"/>
<path d="M9.8 6.2 C12 3.2 16 1.8 20 2 C24 2.6 27 5 28.2 9.2 C27.6 11 26.2 11.4 24.8 11 C23 10 21 8.9 19 8.5 C16 8 13 7.9 11 8.4 C10 8 9.5 7.2 9.8 6.2Z" fill="#c6d64c"/>
<path d="M7 11.4 C8 9.6 10.5 9 13 9.3 C16 9.2 18.5 9.5 20 10.6 C21 12 21.6 13.4 22.8 14.4 C21.6 16 20.2 17 19.2 19 C18.2 21 17 22.6 15.8 23.2 C15 21.6 14.6 19.2 14.5 17.2 C13 16.6 11 16.1 9.5 15.1 C8 14 7 12.8 7 11.4Z" fill="url(#ga)"/>
<path d="M0.4 13.6 C2 14.6 3.8 16.4 4.5 18.4 C4.2 19.8 3.7 21 3.1 21.8 C1.5 19.6 0.6 16.8 0.4 13.6Z" fill="#d4c23c"/>
</svg>
<div class="t" style="left:1283.10px;top:452.80px;font-size:29.5px;line-height:44px;color:#f2f2f2;font-weight:700;letter-spacing:-0.315px;">Multi-language</div>
<div class="t" style="left:1249.32px;top:492.80px;font-size:29.5px;line-height:44px;color:#f2f2f2;font-weight:700;letter-spacing:-0.693px;">Support</div>
<div class="t" style="left:1250.00px;top:579.00px;font-size:25.5px;line-height:38px;color:#939393;letter-spacing:-0.418px;">We're planning to add comprehensive</div>
<div class="t" style="left:1249.20px;top:611.00px;font-size:25.5px;line-height:38px;color:#939393;letter-spacing:-0.319px;">language support to make our platform acc...</div>
<div class="t" style="left:1249.70px;top:659.00px;font-size:25.5px;line-height:38px;color:#939393;letter-spacing:-0.157px;">0 votes</div>
<div class="b" style="left:1859px;top:428px;width:548px;height:260px;background:#0a0a0a;border:2px solid #1f1f1f;border-radius:16px;box-sizing:border-box"></div>
<svg class="i" style="left:1887px;top:460px" width="25" height="28" viewBox="0 0 25 28">
<rect x="0" y="0" width="25" height="28" fill="#dde3ea"/>
<rect x="2.7" y="10" width="5" height="18" fill="#0cb815"/>
<rect x="10.2" y="15" width="5.5" height="13" fill="#b80808"/>
<rect x="18" y="4" width="5" height="24" fill="#0a58c2"/>
</svg>
<div class="t" style="left:1918.06px;top:452.80px;font-size:29.5px;line-height:44px;color:#f2f2f2;font-weight:700;letter-spacing:-1.077px;">New Dashboard</div>
<div class="t" style="left:1886.92px;top:492.80px;font-size:29.5px;line-height:44px;color:#f2f2f2;font-weight:700;letter-spacing:-0.611px;">Analytic</div>
<div class="t" style="left:1886.00px;top:579.00px;font-size:25.5px;line-height:38px;color:#939393;letter-spacing:-0.364px;">We're excited to announce a completely</div>
<div class="t" style="left:1885.20px;top:611.00px;font-size:25.5px;line-height:38px;color:#939393;letter-spacing:-0.265px;">redesigned analytics dashboard with po...</div>
<div class="b" style="left:1859px;top:704px;width:548px;height:260px;background:#0a0a0a;border:2px solid #1f1f1f;border-radius:16px;box-sizing:border-box"></div>
<svg class="i" style="left:1891.3px;top:736px" width="16" height="28" viewBox="0 0 16 28">
<rect x="0.8" y="0.8" width="14.4" height="26.4" rx="1.5" fill="#050505" stroke="#686868" stroke-width="1.6"/>
<circle cx="4.0" cy="4.8" r="1.0" fill="#3c3"/><circle cx="7.0" cy="4.8" r="1.0" fill="#eee"/><circle cx="10.0" cy="4.8" r="1.0" fill="#d8f"/><circle cx="13.0" cy="4.8" r="1.0" fill="#999"/>
<circle cx="4.0" cy="8.2" r="1.0" fill="#1ae"/><circle cx="7.0" cy="8.2" r="1.0" fill="#555"/><circle cx="10.0" cy="8.2" r="1.0" fill="#dcb"/><circle cx="13.0" cy="8.2" r="1.0" fill="#4df"/>
<circle cx="4.0" cy="11.4" r="1.0" fill="#dc5"/><circle cx="7.0" cy="11.4" r="1.0" fill="#ddd"/><circle cx="10.0" cy="11.4" r="1.0" fill="#d55"/><circle cx="13.0" cy="11.4" r="1.0" fill="#666"/>
<circle cx="4.0" cy="14.6" r="1.0" fill="#4cc"/><circle cx="7.0" cy="14.6" r="1.0" fill="#d4d"/><circle cx="10.0" cy="14.6" r="1.0" fill="#1ad"/><circle cx="13.0" cy="14.6" r="1.0" fill="#f90"/>
<circle cx="4.0" cy="17.8" r="1.0" fill="#eee"/><circle cx="7.0" cy="17.8" r="1.0" fill="#ee4"/><circle cx="10.0" cy="17.8" r="1.0" fill="#556"/><circle cx="13.0" cy="17.8" r="1.0" fill="#aaa"/>
<circle cx="4.0" cy="21.0" r="1.0" fill="#1ad"/><circle cx="7.0" cy="21.0" r="1.0" fill="#e65"/><circle cx="10.0" cy="21.0" r="1.0" fill="#ddd"/>
<circle cx="4.0" cy="25.0" r="1.0" fill="#4d6"/><circle cx="7.0" cy="25.0" r="1.0" fill="#2cf"/><circle cx="10.0" cy="25.0" r="1.0" fill="#4d6"/><circle cx="13.0" cy="25.0" r="1.0" fill="#fff"/>
</svg>
<div class="t" style="left:1918.06px;top:728.80px;font-size:29.5px;line-height:44px;color:#f2f2f2;font-weight:700;letter-spacing:-0.828px;">Mobile App 2.0</div>
<div class="t" style="left:1884.52px;top:768.80px;font-size:29.5px;line-height:44px;color:#f2f2f2;font-weight:700;letter-spacing:-0.577px;">Released</div>
<div class="t" style="left:1885.20px;top:855.00px;font-size:25.5px;line-height:38px;color:#939393;letter-spacing:-0.406px;">Our biggest mobile update yet is now</div>
<div class="t" style="left:1885.20px;top:887.00px;font-size:25.5px;line-height:38px;color:#939393;letter-spacing:-0.826px;">available on iOS and Android!...</div>
<div class="b" style="left:1859px;top:980px;width:548px;height:228px;background:#0a0a0a;border:2px solid #1f1f1f;border-radius:16px;box-sizing:border-box"></div>
<svg class="i" style="left:1885px;top:1012px;will-change:transform" width="29" height="28" viewBox="0 0 29 28">
<rect x="0" y="0" width="29" height="28" fill="#dcdcdc"/>
<rect x="0" y="0" width="29" height="11" fill="#b65c5c"/>
<circle cx="6.8" cy="2.8" r="1.1" fill="#111"/><circle cx="22" cy="2.8" r="1.1" fill="#111"/>
<text x="6.5" y="9.2" font-family="Liberation Sans" font-size="5.5" fill="#d59a9a">JUL</text>
<text x="14.8" y="25.6" font-family="Liberation Sans" font-size="16" fill="#333" text-anchor="middle" letter-spacing="-0.8">17</text>
</svg>
<div class="t" style="left:1918.74px;top:1004.80px;font-size:29.5px;line-height:44px;color:#f2f2f2;font-weight:700;letter-spacing:-0.509px;">Calendar Integration</div>
<div class="t" style="left:1886.00px;top:1099.00px;font-size:25.5px;line-height:38px;color:#939393;letter-spacing:-0.552px;">We're working on seamless calendar</div>
<div class="t" style="left:1885.20px;top:1131.00px;font-size:25.5px;line-height:38px;color:#939393;letter-spacing:-0.241px;">integration with popular services to help ...</div>
</body></html>
